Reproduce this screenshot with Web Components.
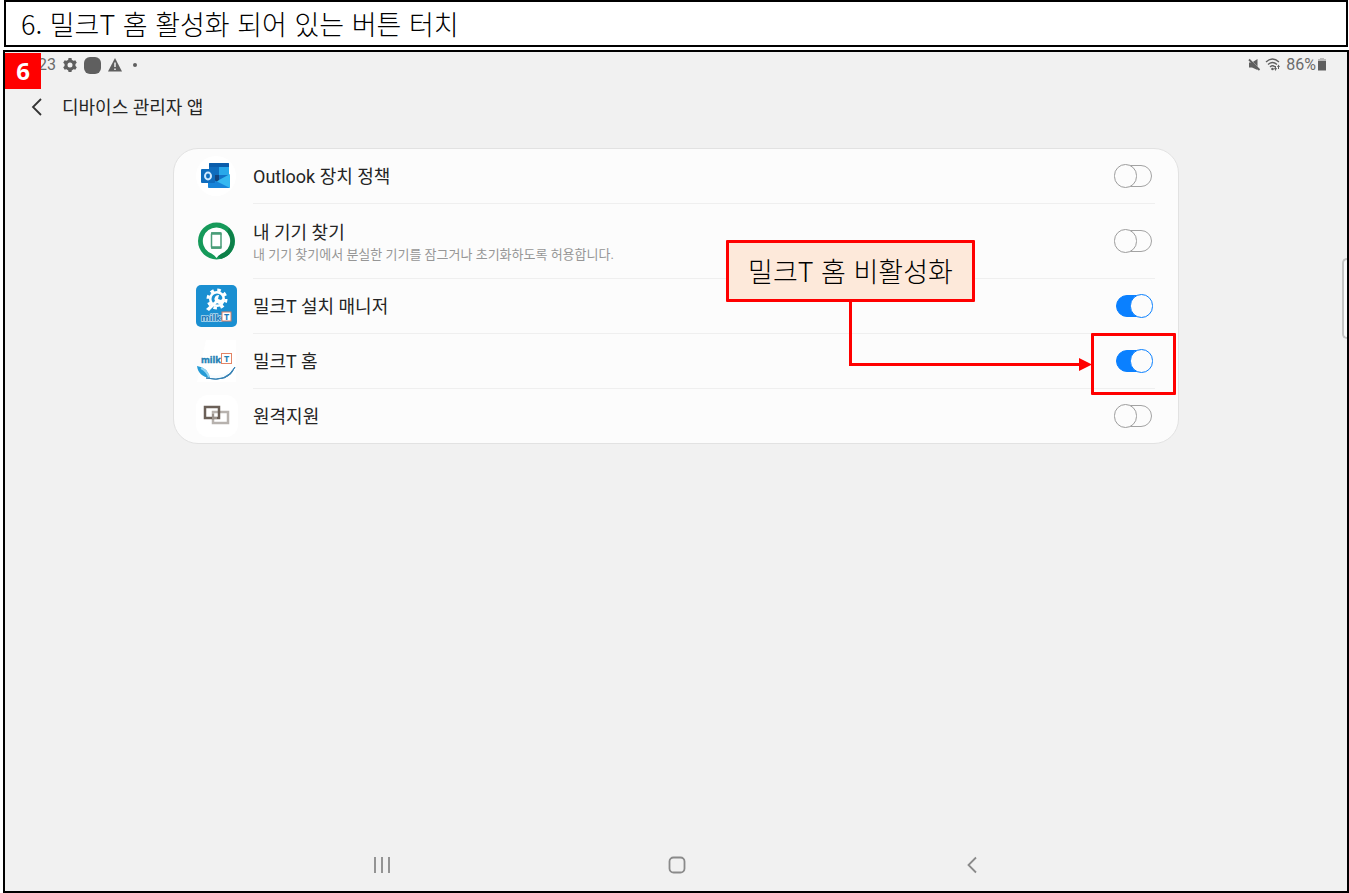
<!DOCTYPE html>
<html lang="ko">
<head>
<meta charset="utf-8">
<title>디바이스 관리자 앱</title>
<style>
html,body{margin:0;height:100%}
body{font-family:Roboto,"Noto Sans CJK KR",sans-serif;color:#252525;background:#fff}
</style>
</head>
<body>
<guide-page>
  <guide-title slot="title">6. 밀크T 홈 활성화 되어 있는 버튼 터치</guide-title>
  <tablet-screen step="6">
    <status-bar slot="status"></status-bar>
    <screen-header slot="header">디바이스 관리자 앱</screen-header>
    <app-list>
      <app-row icon="outlook" label="Outlook 장치 정책"></app-row>
      <app-row icon="find" label="내 기기 찾기" note="내 기기 찾기에서 분실한 기기를 잠그거나 초기화하도록 허용합니다."></app-row>
      <app-row icon="manager" label="밀크T 설치 매니저" on></app-row>
      <app-row icon="home" label="밀크T 홈" on></app-row>
      <app-row icon="remote" label="원격지원"></app-row>
      <call-out slot="over">밀크T 홈 비활성화</call-out>
    </app-list>
    <nav-bar slot="nav"></nav-bar>
  </tablet-screen>
</guide-page>
<script>
const define = (name, render) => customElements.define(name, class extends HTMLElement {
  constructor() {
    super();
    this.attachShadow({ mode: 'open' }).innerHTML = render(this);
  }
});

const icons = {
  outlook: `<circle cx="20" cy="21" r="20" fill="#fff"/><path d="M13 9q0-1 1-1h18q1 0 1 1v11H13z" fill="#1490df"/><path d="M13 9q0-1 1-1h18q1 0 1 1v3H13z" fill="#0a5dab"/><path d="M13 12h10v8H13z" fill="#0f6cbd"/><path d="M23 12h10v8H23z" fill="#28a8ea"/><path d="M13 20h10v7H13z" fill="#14447d"/><path d="M23 20h10v7H23z" fill="#1173c7"/><path d="M12 33l11-8 11-6v13q0 1-1 1z" fill="#35b8f1"/><path d="M12 22l22 11H13q-1 0-1-1z" fill="#1784d9"/><rect x="5" y="14" width="14" height="14" rx="1" fill="#0f6cbd"/><ellipse cx="12" cy="21" rx="3" ry="3.4" fill="none" stroke="#cfe9ff" stroke-width="2"/>`,
  find: `<circle cx="20.500" cy="21" r="18.500" fill="#169a5a"/><path d="M33 8a18.500 18.500 0 0 1-8 31l-5-4z" fill="#0d8049"/><path d="M20.500 7.500a13.500 13.500 0 0 0-8 24.500q5 2 8 6 3-4 8-6a13.500 13.500 0 0 0-8-24.500z" fill="#fff"/><rect x="15.500" y="13" width="9.500" height="15" rx="1" fill="#fff" stroke="#4a9d78" stroke-width="1.500"/><path d="M15 13.500h10.500M15 27.500h10.500" stroke="#4a9d78" stroke-width="2.500"/>`,
  manager: `<rect width="41" height="42" rx="5" fill="#1a8fd1"/><circle cx="21" cy="14" r="8" fill="#fff"/><circle cx="21" cy="14" r="9" fill="none" stroke="#fff" stroke-width="3" stroke-dasharray="3.500 3.570"/><circle cx="21" cy="14" r="5.500" fill="#1a8fd1"/><path d="M10 24l9-8a4 4 0 0 1 4-6l-1 4 3 1 2-2a4 4 0 0 1-6 5l-8 8z" fill="#fff"/><text x="5" y="36" font-size="9" font-weight="700" fill="#1a78b9" stroke="#b9dcf0" stroke-width="1.500" paint-order="stroke">milk</text><rect x="26" y="27" width="9" height="9" fill="#fff" stroke="#d98068"/><text x="28" y="35" font-size="9" font-weight="700" fill="#1a78b9">T</text>`,
  home: `<path d="M10 0h30v42H1z" fill="#fff"/><text x="5" y="23" font-size="9" font-weight="700" fill="#2482b5" stroke="#2482b5" stroke-width=".4">milk</text><rect x="25.500" y="13.500" width="10" height="10" fill="#fff" stroke="#e38465"/><text x="28" y="22" font-size="9" font-weight="700" fill="#2482b5">T</text><path d="M1 26q20 19 38 0c-3 9-9 13-18 13S3 36 1 26z" fill="#f7fcff"/><path d="M1 26q10 1 13 12C6 37 2 33 1 26z" fill="#259bd6"/><path d="M5 28q6 3 8 9" stroke="#92d5f2" stroke-width="2" fill="none"/><path d="M10 38q20 5 29-11-6 16-29 11z" fill="#24679a" stroke="#3582b5"/>`,
  remote: `<rect x="0" y="0" width="42" height="42" rx="12" fill="#fff"/><rect x="17" y="17" width="15" height="11" fill="none" stroke="#b7b2ae" stroke-width="2.500"/><rect x="9" y="12" width="14" height="11" fill="none" stroke="#6b6058" stroke-width="2.500"/><path d="M17 19v4h4" fill="none" stroke="#99918b" stroke-width="2"/>`
};

define('guide-page', () => `
<style>
:host{display:flex;flex-direction:column;gap:3px;box-sizing:border-box;min-height:100vh;padding-left:3px}
</style>
<slot name="title"></slot><slot></slot>`);

define('guide-title', () => `
<style>
:host{display:block;margin:0 1px;border:2px solid #000;background:#fff;color:#000}
h1{margin:0;padding:0 15px;font:300 27px/43px "Noto Sans CJK KR",sans-serif}
</style>
<h1><slot></slot></h1>`);

define('tablet-screen', el => `
<style>
:host{display:flex;flex-direction:column;flex:1;position:relative;border:2px solid #000;background:#f1f1f1}
.step{position:absolute;left:0;top:1px;width:36px;height:36px;background:#f00;color:#fff;text-align:center;font:700 24px/36px "Noto Sans",sans-serif}
.handle{position:absolute;right:0;top:206px;width:5px;height:81px;box-sizing:border-box;border:2px solid #c4c4c4;border-right:0;border-radius:5px 0 0 5px;background:#fafafa}
main{flex:1;padding:12px 168px}
</style>
<slot name="status"></slot><slot name="header"></slot>
<main><slot></slot></main>
<slot name="nav"></slot>
<span class="step">${el.getAttribute('step')}</span><span class="handle"></span>`);

define('status-bar', () => `
<style>
:host{display:flex;justify-content:space-between;height:26px;padding:0 20px 0 33px;font-size:16px;line-height:28px;color:#6b6b6b}
div{display:flex;align-items:center}
.left{gap:6px}
.right{gap:4px}
.charge{display:flex;align-items:center;gap:1px}
svg{display:block;fill:#5f5f5f}
</style>
<div class="left"><span>23</span>
<svg width="16" height="16" viewBox="0 0 16 16"><circle cx="8" cy="8" r="4" fill="none" stroke="#5f5f5f" stroke-width="3"/><path d="M6.500 1h3l.5 3H6zM6.500 15h3l.5-3H6zM1.200 5.800l1.500-2.600 2.800 1.100-2 3.400zM14.800 5.800l-1.500-2.600-2.800 1.100 2 3.400zM1.200 10.200l1.500 2.600 2.800-1.100-2-3.400zM14.800 10.200l-1.500 2.600-2.800-1.100 2-3.400z"/></svg>
<svg width="17" height="17" viewBox="0 0 17 17"><rect width="17" height="17" rx="6"/></svg>
<svg width="16" height="16" viewBox="0 0 16 16"><path d="M8 1l7 13.500H1z"/><path d="M8 5.500v4.500M8 11.500v1.500" stroke="#f1f1f1" stroke-width="1.500"/></svg>
<svg width="12" height="16" viewBox="0 0 12 16"><circle cx="6" cy="8" r="2"/></svg></div>
<div class="right">
<svg width="14" height="16" viewBox="0 0 14 16"><path d="M2 5.500h3L10.500 2v11L5 10.500H2z"/><path d="M2 1.500l11 11" stroke="#f1f1f1" stroke-width="1"/><path d="M2 2.500l10.500 10.500" stroke="#5f5f5f" stroke-width="1.800"/></svg>
<svg width="17" height="16" viewBox="0 0 17 16"><g fill="none" stroke="#5f5f5f" stroke-width="1.300"><path d="M1 5q6.500-6 13 0M3 7.500q4.500-4 9 0M5 10q2.500-2.500 5 0"/></g><circle cx="7.500" cy="12" r="1.300"/><path d="M9 11h1V9h1v2h1l-1.500 3zM13 12v-2h-1l1.500-2.500L15 10h-1v2z"/></svg>
<span class="charge"><span>86%</span>
<svg width="10" height="14" viewBox="0 0 10 14"><path d="M3 0h4v1h2v3H1V1h2z" fill="#bbb"/><path d="M1 3h8v9.500H1z"/></svg></span></div>`);

define('screen-header', () => `
<style>
:host{display:flex;align-items:center;gap:13px;height:58px;padding-left:20px}
button{border:0;background:none;padding:0;width:24px;height:24px}
svg{display:block}
h2{margin:0;padding-top:2px;font-size:18px;line-height:26px;font-weight:400}
</style>
<button type="button" aria-label="뒤로"><svg width="24" height="24" viewBox="0 0 24 24" fill="none" stroke="#333" stroke-width="1.800"><path d="M16 4L8 12l8 8"/></svg></button>
<h2><slot></slot></h2>`);

define('app-list', () => `
<style>
:host{display:block;position:relative;border:1px solid #e2e2e2;border-radius:25px;background:#fcfcfc}
</style>
<slot></slot><slot name="over"></slot>`);

define('app-row', el => {
  const note = el.getAttribute('note');
  return `
<style>
:host{display:flex;align-items:stretch;gap:15px;padding:0 23px 0 22px}
:host(:first-child) .body{border-top:0;min-height:54px}
.icon{display:block;align-self:center;flex:none;font-family:"Open Sans",sans-serif}
.body{flex:1;display:flex;align-items:center;justify-content:space-between;box-sizing:border-box;min-height:${note ? 75 : 55}px;border-top:1px solid #efefef;padding-right:2px}
label{display:block;flex:1;padding-top:2px;font-size:18px;line-height:26px}
small{display:block;font-size:13px;line-height:18px;color:#969696}
input{appearance:none;position:relative;flex:none;margin:0;width:39px;height:24px}
input::before,input::after{content:"";position:absolute;box-sizing:border-box}
input::before{left:2px;right:1px;top:1px;bottom:1px;border:1px solid #a3a3a3;border-radius:11px}
input::after{left:0;top:0;width:23px;height:24px;border:1px solid #9d9d9d;border-radius:12px;background:#fcfcfc}
input:checked::before{background:#0a80ff;border-color:#0a80ff}
input:checked::after{left:16px;border-color:#0a80ff}
</style>
<svg class="icon" width="42" height="42" viewBox="0 0 42 42" aria-hidden="true">${icons[el.getAttribute('icon')]}</svg>
<div class="body"><label for="toggle">${el.getAttribute('label')}${note ? `<small>${note}</small>` : ''}</label>
<input id="toggle" type="checkbox" role="switch"${el.hasAttribute('on') ? ' checked' : ''}></div>`;
});

define('call-out', () => `
<style>
:host{position:absolute;right:2px;top:91px;width:450px;height:155px;pointer-events:none;color:#000}
.note,.target{position:absolute;box-sizing:border-box;border:3px solid #f00;border-radius:1px}
.note{left:0;top:0;width:249px;height:62px;background:#fde9da;text-align:center;font:300 27px/56px "Noto Sans CJK KR",sans-serif;white-space:nowrap}
.target{right:0;bottom:0;width:85px;height:62px}
svg{position:absolute;left:0;top:0}
</style>
<svg width="450" height="155" viewBox="0 0 450 155"><path d="M124.500 60v64.500H355" fill="none" stroke="#f00" stroke-width="3"/><path d="M353 118l13 6.500-13 6.500z" fill="#f00"/></svg>
<div class="note"><slot></slot></div><div class="target"></div>`);

define('nav-bar', () => `
<style>
:host{display:flex;justify-content:center;gap:271px;padding:0 0 14px 2px}
button{border:0;background:none;padding:0;width:24px;height:24px}
svg{display:block;fill:none;stroke:#8a8a8a;stroke-width:1.800}
</style>
<button type="button" aria-label="최근 앱"><svg width="24" height="24"><path d="M5 4v16M12 4v16M19 4v16"/></svg></button>
<button type="button" aria-label="홈"><svg width="24" height="24"><rect x="4.500" y="4.500" width="15" height="15" rx="4"/></svg></button>
<button type="button" aria-label="이전"><svg width="24" height="24"><path d="M16 4.500L8.500 12l7.500 7.500"/></svg></button>`);
</script>
</body>
</html>
